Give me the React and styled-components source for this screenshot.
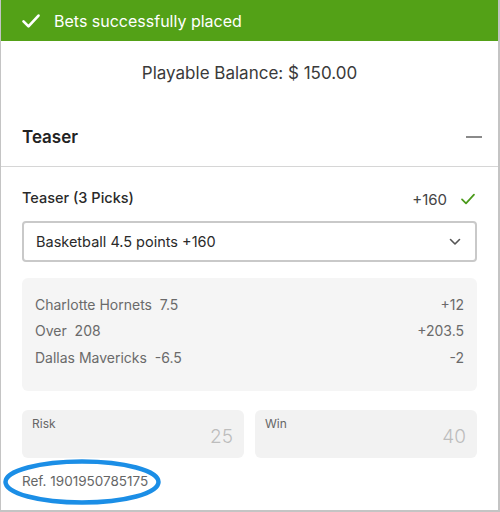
import React from "react";
import styled, { createGlobalStyle } from "styled-components";

const Global = createGlobalStyle`
  html, body { margin: 0; padding: 0; background: #fff; }
  body { font-family: Inter, "Noto Sans", sans-serif; }
  * { box-sizing: border-box; }
`;

const Frame = styled.div`
  width: 500px;
  height: 512px;
  border-left: 1px solid #c4c4c4;
  border-right: 2px solid #c4c4c4;
  border-bottom: 2px solid #c4c4c4;
  display: flex;
  flex-direction: column;
  position: relative;
  overflow: hidden;
`;

const Banner = styled.div`
  height: 41px;
  background: #53a117;
  color: #fff;
  display: flex;
  align-items: center;
  gap: 13px;
  padding-left: 21px;
  font-size: 16px;
  margin: 0 -2px 0 -1px;
`;

const Balance = styled.div`
  text-align: center;
  font-size: 17px;
  color: #3a3a3a;
  padding-top: 22px;
  height: 85px;
`;

const SectionHead = styled.div`
  display: flex;
  align-items: center;
  justify-content: space-between;
  padding: 0 16px 0 21px;
  height: 22px;
  font-size: 17px;
  font-weight: 600;
  color: #222;
`;

const Minus = styled.span`
  width: 16px;
  height: 2px;
  background: #8a8a8a;
`;

const Divider = styled.div`
  height: 1px;
  background: #d6d6d6;
  margin-top: 18px;
`;

const Body = styled.div`
  padding: 0 21px;
  display: flex;
  flex-direction: column;
`;

const PickHead = styled.div`
  display: flex;
  align-items: center;
  justify-content: space-between;
  margin-top: 19px;
  height: 22px;
`;

const PickTitle = styled.div`
  font-size: 14.5px;
  font-weight: 500;
  color: #2a2a2a;
`;

const PickOdds = styled.div`
  display: flex;
  align-items: center;
  gap: 13px;
  font-size: 15px;
  color: #444;
  margin-top: 4px;
  padding-right: 1px;
`;

const Select = styled.div`
  margin-top: 13px;
  height: 41px;
  border: 2px solid #c9c9c9;
  border-radius: 4px;
  display: flex;
  align-items: center;
  justify-content: space-between;
  padding: 0 14px 0 12px;
  font-size: 14.5px;
  color: #2a2a2a;
`;

const LegsBox = styled.div`
  margin-top: 16px;
  background: #f5f5f5;
  border-radius: 6px;
  padding: 13px 13px 20px 13px;
  display: flex;
  flex-direction: column;
`;

const LegRow = styled.div`
  display: flex;
  justify-content: space-between;
  height: 26.5px;
  align-items: center;
  font-size: 14px;
  color: #6a6a6a;
`;

const Amounts = styled.div`
  margin-top: 19px;
  display: grid;
  grid-template-columns: 1fr 1fr;
  gap: 11px;
`;

const AmountBox = styled.div`
  height: 48px;
  background: #f2f2f2;
  border-radius: 6px;
  padding: 6px 11px 0 10px;
  display: flex;
  flex-direction: column;
`;

const AmountLabel = styled.div`
  font-size: 12px;
  color: #666;
`;

const AmountValue = styled.div`
  font-size: 19px;
  color: #bdbdbd;
  text-align: right;
  margin-top: -6px;
  font-weight: 300;
`;

const RefLine = styled.div`
  margin-top: 15px;
  font-size: 13.5px;
  color: #666;
  position: relative;
  align-self: flex-start;
`;

const Ellipse = styled.svg`
  position: absolute;
  left: -19px;
  top: -14px;
  overflow: visible;
`;

const Check = ({ size, color, stroke }) => (
  <svg width={size} height={size} viewBox="0 0 24 24" fill="none">
    <path d="M3 12.5l6 6L21 5.5" stroke={color} strokeWidth={stroke} strokeLinecap="round" strokeLinejoin="round" />
  </svg>
);

const legs = [
  ["Charlotte Hornets\u00a0 7.5", "+12"],
  ["Over\u00a0 208", "+203.5"],
  ["Dallas Mavericks\u00a0 -6.5", "-2"],
];

export default function App() {
  return (
    <>
      <Global />
      <Frame>
        <Banner>
          <Check size={20} color="#fff" stroke={3.2} />
          Bets successfully placed
        </Banner>
        <Balance>Playable Balance: $ 150.00</Balance>
        <SectionHead>
          Teaser
          <Minus />
        </SectionHead>
        <Divider />
        <Body>
          <PickHead>
            <PickTitle>Teaser (3 Picks)</PickTitle>
            <PickOdds>
              +160
              <Check size={16} color="#4a9a1a" stroke={2.6} />
            </PickOdds>
          </PickHead>
          <Select>
            Basketball 4.5 points +160
            <svg width="12" height="8" viewBox="0 0 12 8" fill="none">
              <path d="M1.5 1.5L6 6l4.5-4.5" stroke="#555" strokeWidth="1.6" strokeLinecap="round" strokeLinejoin="round" />
            </svg>
          </Select>
          <LegsBox>
            {legs.map(([l, r]) => (
              <LegRow key={l}>
                <span>{l}</span>
                <span>{r}</span>
              </LegRow>
            ))}
          </LegsBox>
          <Amounts>
            <AmountBox>
              <AmountLabel>Risk</AmountLabel>
              <AmountValue>25</AmountValue>
            </AmountBox>
            <AmountBox>
              <AmountLabel>Win</AmountLabel>
              <AmountValue>40</AmountValue>
            </AmountBox>
          </Amounts>
          <RefLine>
            Ref. 1901950785175
            <Ellipse width="158" height="46" viewBox="0 0 158 46">
              <ellipse cx="79" cy="23" rx="76.5" ry="20.5" fill="none" stroke="#1b8ee6" strokeWidth="4.5" />
            </Ellipse>
          </RefLine>
        </Body>
      </Frame>
    </>
  );
}
